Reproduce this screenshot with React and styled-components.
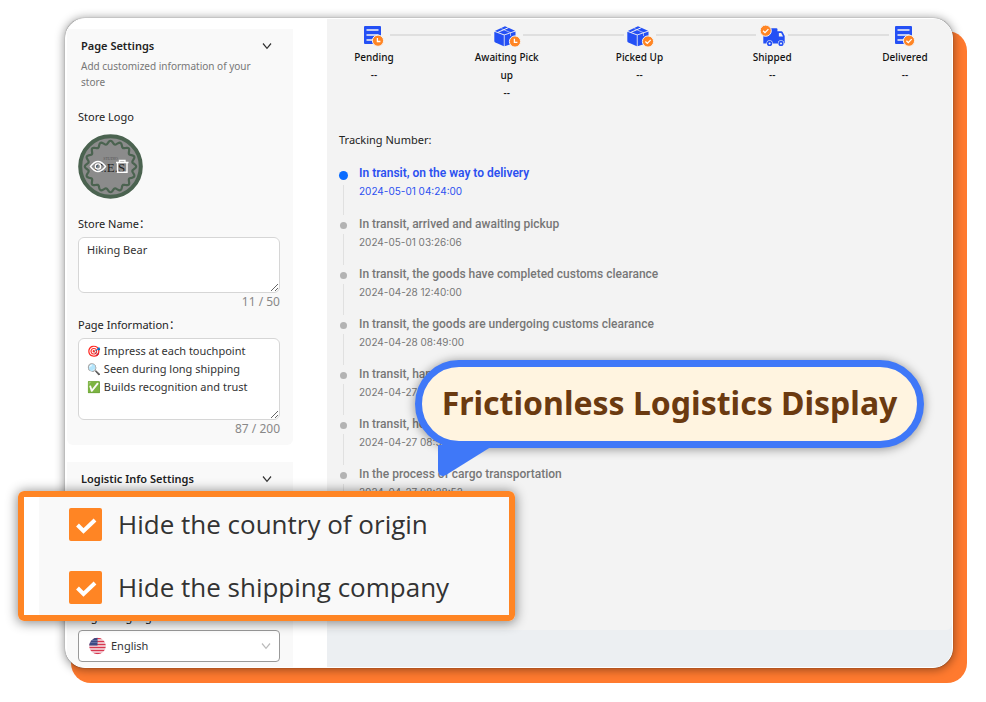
import React from 'react';
import styled, { createGlobalStyle } from 'styled-components';

const GlobalStyle = createGlobalStyle`
  * {
    box-sizing: border-box;
  }

  body {
    background: #fff;
    color: #222;
    font-family: "Noto Sans", "Noto Sans CJK SC", sans-serif;
    font-size: 11px;
    line-height: 18px;
    margin: 0;
  }
`;

const Stage = styled.div`
  display: flex;
  min-height: 100vh;
  padding: 18px 33px 34px 65px;
  position: relative;
`;

const CardWrap = styled.div`
  display: flex;
  flex: 1;
  position: relative;

  &::before {
    background: #ff7a2f;
    border-radius: 20px;
    content: "";
    inset: 13px -14px -15px 6px;
    position: absolute;
  }
`;

const Card = styled.div`
  background: #fff;
  border: 1px solid #fff;
  border-radius: 20px;
  box-shadow: 0 0 1px 0 rgba(0, 0, 0, 0.5), 0 1px 10px 1px rgba(0, 0, 0, 0.4);
  display: flex;
  flex: 1;
  overflow: hidden;
  position: relative;
`;

const Sidebar = styled.aside`
  display: flex;
  flex: 0 0 261px;
  flex-direction: column;
  gap: 17px;
  padding: 10px 34px 0 1px;
`;

const Panel = styled.section`
  background: #f9f9f9;
  border-radius: ${({ $fill }) => ($fill ? '0' : '0 0 6px 6px')};
  display: flex;
  flex: ${({ $fill }) => ($fill ? '1' : 'none')};
  flex-direction: column;
  padding: 8px 13px ${({ $fill }) => ($fill ? '5px' : '7px')} 11px;
`;

const PanelHeader = styled.header`
  padding: 0 8px 0 3px;
`;

const PanelToggle = styled.button`
  align-items: center;
  background: none;
  border: 0;
  color: #222;
  display: flex;
  font: inherit;
  font-weight: 600;
  justify-content: space-between;
  padding: 0;
  width: 100%;
`;

const Hint = styled.p`
  color: #777;
  font-size: 10px;
  line-height: 16px;
  margin: 3px 0 0;
`;

const Field = styled.div`
  display: flex;
  flex-direction: column;
  margin-top: ${({ $top }) => $top};
`;

const Label = styled.label`
  margin-bottom: 4px;
`;

const LogoLabel = styled.span`
  margin-bottom: 8px;
`;

const TextArea = styled.textarea`
  background: #fff;
  border: 1px solid #d6d6d6;
  border-radius: 6px;
  color: #333;
  font: inherit;
  height: ${({ $height }) => $height};
  overflow: hidden;
  padding: 3px 8px;
  width: 100%;
`;

const Counter = styled.span`
  color: #888;
  font-size: 12px;
  text-align: right;
`;

const SelectBox = styled.div`
  position: relative;
`;

const Select = styled.select`
  appearance: none;
  background: #fff;
  border: 1px solid #999;
  border-radius: 4px;
  color: #333;
  font: inherit;
  height: 32px;
  padding: 0 32px;
  width: 100%;
`;

const SelectIcon = styled.span`
  display: flex;
  pointer-events: none;
  position: absolute;
  top: 50%;
  transform: translateY(-50%);
  ${({ $side }) => ($side === 'left' ? 'left: 11px;' : 'right: 9px;')}
`;

const Main = styled.main`
  background: #eceff2;
  display: flex;
  flex: 1;
  flex-direction: column;
  padding-bottom: 37px;
`;

const Tracking = styled.div`
  background: #f3f3f3;
  border-radius: 0 0 6px 0;
  flex: 1;
  padding: 5px 14px 0 12px;
`;

const Steps = styled.ol`
  align-items: flex-start;
  display: flex;
  list-style: none;
  margin: 0;
  padding: 0 0 0 2px;
`;

const Step = styled.li`
  align-items: center;
  color: #111;
  display: flex;
  flex: 0 0 66px;
  flex-direction: column;
  font-size: 10px;
  font-weight: 500;
  text-align: center;

  svg {
    display: block;
  }
`;

const Connector = styled.li`
  background: #dfdfdf;
  flex: 1;
  height: 2px;
  margin: 10px -17px 0;
`;

const TrackingTitle = styled.h2`
  font-size: 11px;
  font-weight: 400;
  margin: 29px 0 15px;
`;

const Timeline = styled.ol`
  font-family: Roboto, sans-serif;
  list-style: none;
  margin: 0;
  padding: 0;
`;

const Event = styled.li`
  color: ${({ $active }) => ($active ? '#2b50f0' : '#777')};
  display: grid;
  gap: 0 12px;
  grid-template-columns: 8px 1fr;
`;

const Rail = styled.div`
  align-items: center;
  display: flex;
  flex-direction: column;
  gap: 5px;
  padding-top: 7px;

  &::before {
    background: ${({ $active }) => ($active ? '#0a6cff' : '#b3b3b3')};
    border-radius: 50%;
    content: "";
    flex: none;
    height: ${({ $active }) => ($active ? '9px' : '7px')};
    width: ${({ $active }) => ($active ? '9px' : '7px')};
  }

  &::after {
    background: #e0e0e0;
    content: "";
    flex: 1;
    width: 1px;
  }
`;

const EventBody = styled.div`
  padding-bottom: ${({ $active }) => ($active ? '15px' : '14px')};
`;

const EventTitle = styled.div`
  font-size: 12px;
  font-weight: ${({ $active }) => ($active ? '600' : '500')};
`;

const EventTime = styled.time`
  display: block;
  font-family: Inter, sans-serif;
  font-size: 10px;
`;

const Popover = styled.fieldset`
  background: #f9f9f9;
  border: 6px solid #ff8524;
  border-radius: 6px;
  box-shadow: 0 1px 12px 1px rgba(0, 0, 0, 0.45), inset 15px 0 0 #fff;
  display: grid;
  font-family: "Open Sans", sans-serif;
  gap: 30px;
  left: 18px;
  margin: 0;
  min-width: 497px;
  padding: 11px 45px;
  position: absolute;
  top: 491px;
`;

const CheckRow = styled.label`
  align-items: center;
  color: #333;
  display: flex;
  font-size: 26px;
  gap: 16px;
  line-height: 33px;
`;

const CheckMark = styled.span`
  display: grid;
  flex: none;

  > * {
    grid-area: 1 / 1;
  }

  svg {
    pointer-events: none;
  }
`;

const Checkbox = styled.input`
  appearance: none;
  background: #fff;
  border: 2px solid #ff8524;
  border-radius: 2px;
  height: 33px;
  margin: 0;
  width: 33px;

  &:checked {
    background: #ff8524;
  }
`;

const Bubble = styled.div`
  background: #fff4e0;
  border: 7px solid #3f78f8;
  border-radius: 44px;
  box-shadow: 0 1px 10px 1px rgba(0, 0, 0, 0.35);
  color: #6b3a10;
  font-size: 32px;
  font-weight: 700;
  left: 415px;
  line-height: 72px;
  min-width: 509px;
  padding-bottom: 2px;
  position: absolute;
  text-align: center;
  top: 360px;
  white-space: nowrap;
`;

const Tail = styled.svg`
  left: 16px;
  position: absolute;
  top: 78px;
`;

function Chevron({ color = '#333' }) {
  return (
    <svg width="10" height="8" viewBox="0 0 10 8" fill="none" stroke={color} strokeWidth="1.2">
      <path d="M1 1.5 5 6.3 9 1.5" />
    </svg>
  );
}

function Badge({ x, y, type }) {
  return (
    <g transform={`translate(${x} ${y})`}>
      <circle r="5.6" fill="#ff8524" stroke="#f3f3f3" strokeWidth="1" />
      <path
        d={type === 'clock' ? 'M-0.6-2.8V0.8H2.4' : 'M-2.6 0-0.7 1.9 2.7-1.6'}
        fill="none"
        stroke="#fff"
        strokeWidth="1.3"
      />
    </g>
  );
}

function DocIcon({ badge }) {
  return (
    <svg width="28" height="24" viewBox="0 0 28 24">
      <rect x="4" y="2" width="17" height="18" rx="1" fill="#2450f5" />
      <path d="M6.5 6H18.5M6.5 11H18.5M6.5 16H13" stroke="#f3f3f3" strokeWidth="1.4" />
      <Badge x={18} y={16.7} type={badge} />
    </svg>
  );
}

function BoxIcon({ badge }) {
  return (
    <svg width="28" height="24" viewBox="0 0 28 24">
      <g fill="#2450f5">
        <path d="M1.3 7.8 10.8 11.2V22.2L2.4 18.6Q1.3 18 1.3 17Z" />
        <path d="M11.6 11.2 22.5 7.6V17.5Q22.5 18.4 21.4 18.9L11.6 22.2Z" />
        <path d="M1.8 6.9 12 2.2 22 6.7 11.3 10.5Z" />
      </g>
      <path d="M5 8.3 15.5 3.6" fill="none" stroke="#f3f3f3" strokeWidth="1" />
      <path d="M8.3 4.6 17.5 8.7V12" fill="none" stroke="#f3f3f3" strokeWidth="0.6" />
      <Badge x={22} y={17.5} type={badge} />
    </svg>
  );
}

function TruckIcon() {
  return (
    <svg width="28" height="24" viewBox="0 0 28 24">
      <path d="M5.3 5.2Q5.3 4.2 6.3 4.2H18.5Q19.4 4.2 19.4 5.2V19.4H5.3Z" fill="#2450f5" />
      <path d="M19 7.2H23.3Q24.2 7.2 24.6 8L26.7 12V18.4Q26.7 19.4 25.8 19.4H19Z" fill="#2450f5" />
      <path d="M20.9 8.9H23.2L25 12.6H20.9Z" fill="#f3f3f3" />
      {[11.6, 23].map((cx) => (
        <g key={cx}>
          <circle cx={cx} cy="19.4" r="3.1" fill="#f3f3f3" />
          <circle cx={cx} cy="19.4" r="1.8" fill="none" stroke="#2450f5" strokeWidth="1.6" />
        </g>
      ))}
      <Badge x={7.7} y={6.7} type="check" />
    </svg>
  );
}

const scallop = Array.from({ length: 241 }, (_, i) => {
  const a = (i / 240) * Math.PI * 2;
  const r = 24 + 1.7 * Math.cos(16 * a);
  return `${(32.5 + r * Math.sin(a)).toFixed(2)},${(32.5 - r * Math.cos(a)).toFixed(2)}`;
}).join(' ');

function StoreLogo() {
  return (
    <svg width="65" height="65" viewBox="0 0 65 65" role="img" aria-label="Store logo">
      <circle cx="32.5" cy="32.5" r="30.3" fill="#8b8b8b" stroke="#4b6350" strokeWidth="4" />
      <polygon points={scallop} fill="none" stroke="#4b6350" strokeWidth="2.2" />
      <g fontFamily="Liberation Serif, serif" textAnchor="middle" fill="#222">
        <text x="32.5" y="26" fontSize="4" fill="#555">STUDIO</text>
        <text x="32" y="38" fontSize="13">C.E.S</text>
      </g>
      <g fill="none" stroke="#fff" strokeWidth="1.4">
        <path d="M12.5 32.5Q20 22.5 27.5 32.5Q20 42.5 12.5 32.5Z" />
        <circle cx="20" cy="32.5" r="2.6" />
        <path d="M38 28.5H50.5M41.5 28V26.5H47V28M39.5 29V38.3H49V29" />
      </g>
    </svg>
  );
}

function Flag() {
  return (
    <svg width="17" height="17" viewBox="0 0 17 17">
      <clipPath id="flag-clip">
        <circle cx="8.5" cy="8.5" r="8.3" />
      </clipPath>
      <g clipPath="url(#flag-clip)">
        <rect width="17" height="17" fill="#f6e9ec" />
        <path d="M0 1H17M0 4H17M0 7H17M0 10H17M0 13H17M0 16H17" stroke="#d8384f" strokeWidth="1.5" />
        <rect width="8.5" height="8" fill="#3c4a85" />
        <path d="M2.5 3H8M1.5 5H8" stroke="#aab2d6" strokeWidth="0.7" strokeDasharray="1 1" />
      </g>
    </svg>
  );
}

const steps = [
  { label: 'Pending', icon: <DocIcon badge="clock" /> },
  { label: 'Awaiting Pick up', icon: <BoxIcon badge="clock" /> },
  { label: 'Picked Up', icon: <BoxIcon badge="check" /> },
  { label: 'Shipped', icon: <TruckIcon /> },
  { label: 'Delivered', icon: <DocIcon badge="check" /> },
];

const events = [
  { title: 'In transit, on the way to delivery', time: '2024-05-01 04:24:00', active: true },
  { title: 'In transit, arrived and awaiting pickup', time: '2024-05-01 03:26:06' },
  { title: 'In transit, the goods have completed customs clearance', time: '2024-04-28 12:40:00' },
  { title: 'In transit, the goods are undergoing customs clearance', time: '2024-04-28 08:49:00' },
  { title: 'In transit, handed over', time: '2024-04-27 10:12:00' },
  { title: 'In transit, held', time: '2024-04-27 08:50:00' },
  { title: 'In the process of cargo transportation', time: '2024-04-27 08:28:52' },
];

const pageInformation = `🎯 Impress at each touchpoint
🔍 Seen during long shipping
✅ Builds recognition and trust`;

function CheckOption({ id, children }) {
  return (
    <CheckRow htmlFor={id}>
      <CheckMark>
        <Checkbox id={id} type="checkbox" defaultChecked />
        <svg width="33" height="33" viewBox="0 0 33 33" fill="none" stroke="#fff" strokeWidth="4">
          <path d="M8.5 17 14.5 23 26 12" />
        </svg>
      </CheckMark>
      {children}
    </CheckRow>
  );
}

export default function App() {
  return (
    <Stage>
      <GlobalStyle />
      <CardWrap>
        <Card>
          <Sidebar>
            <Panel>
              <PanelHeader>
                <PanelToggle type="button">
                  Page Settings
                  <Chevron />
                </PanelToggle>
                <Hint>Add customized information of your store</Hint>
              </PanelHeader>
              <Field $top="18px">
                <LogoLabel>Store Logo</LogoLabel>
                <StoreLogo />
              </Field>
              <Field $top="16px">
                <Label htmlFor="store-name">Store Name：</Label>
                <TextArea id="store-name" $height="56px" defaultValue="Hiking Bear" />
                <Counter>11 / 50</Counter>
              </Field>
              <Field $top="5px">
                <Label htmlFor="page-info">Page Information：</Label>
                <TextArea id="page-info" $height="82px" defaultValue={pageInformation} />
                <Counter>87 / 200</Counter>
              </Field>
            </Panel>
            <Panel $fill>
              <PanelHeader>
                <PanelToggle type="button">
                  Logistic Info Settings
                  <Chevron />
                </PanelToggle>
              </PanelHeader>
              <Field $top="auto">
                <Label htmlFor="language">Page Language：</Label>
                <SelectBox>
                  <Select id="language" defaultValue="en">
                    <option value="en">English</option>
                  </Select>
                  <SelectIcon $side="left">
                    <Flag />
                  </SelectIcon>
                  <SelectIcon $side="right">
                    <Chevron color="#bbb" />
                  </SelectIcon>
                </SelectBox>
              </Field>
            </Panel>
          </Sidebar>
          <Main>
            <Tracking>
              <Steps>
                {steps.map((step, i) => (
                  <React.Fragment key={step.label}>
                    {i > 0 && <Connector aria-hidden="true" />}
                    <Step>
                      {step.icon}
                      <span>{step.label}</span>
                      <span>--</span>
                    </Step>
                  </React.Fragment>
                ))}
              </Steps>
              <TrackingTitle>Tracking Number:</TrackingTitle>
              <Timeline>
                {events.map(({ title, time, active }) => (
                  <Event key={time} $active={active}>
                    <Rail $active={active} />
                    <EventBody $active={active}>
                      <EventTitle $active={active}>{title}</EventTitle>
                      <EventTime>{time}</EventTime>
                    </EventBody>
                  </Event>
                ))}
              </Timeline>
            </Tracking>
          </Main>
        </Card>
      </CardWrap>
      <Bubble>
        Frictionless Logistics Display
        <Tail width="56" height="32" viewBox="0 0 56 32">
          <path d="M0 0H56L8 30Q1 33 0 26Z" fill="#3f78f8" />
        </Tail>
      </Bubble>
      <Popover>
        <CheckOption id="hide-country">Hide the country of origin</CheckOption>
        <CheckOption id="hide-company">Hide the shipping company</CheckOption>
      </Popover>
    </Stage>
  );
}
